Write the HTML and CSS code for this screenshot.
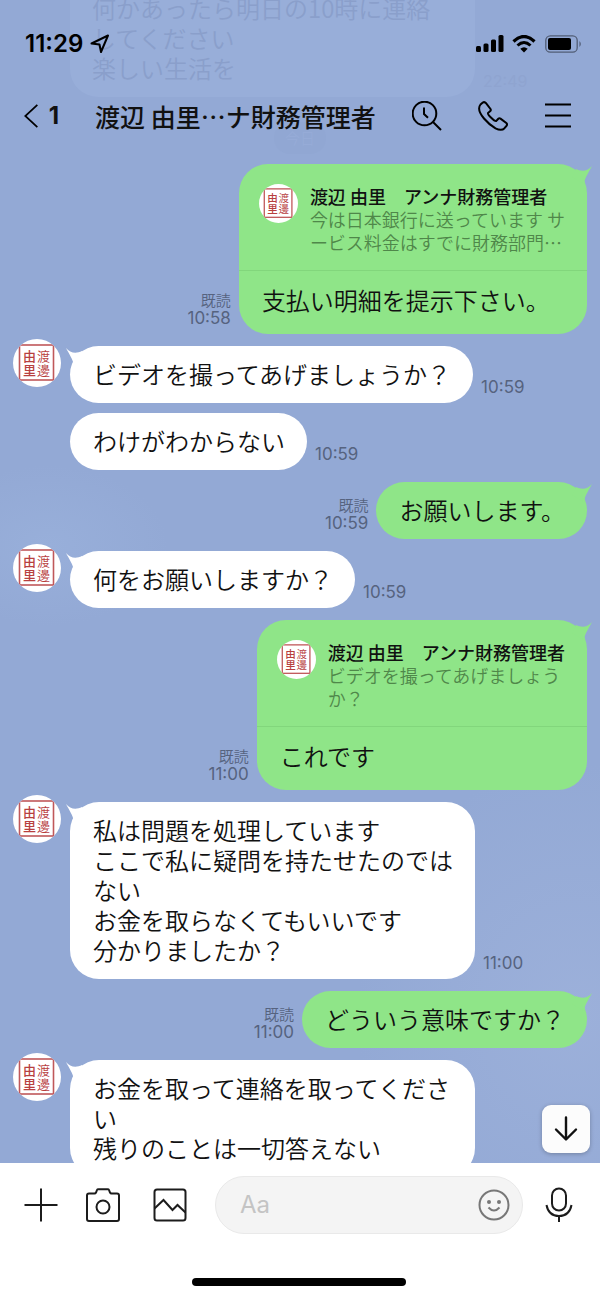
FILE: index.html
```html
<!DOCTYPE html>
<html lang="ja">
<head>
  <meta charset="UTF-8">
  <meta name="viewport" content="width=device-width, initial-scale=1">
  <title>トーク</title>
  <link rel="stylesheet" href="styles.css">
</head>
<body>
  <svg class="defs" aria-hidden="true">
    <symbol id="seal" viewBox="0 0 48 48">
      <rect width="48" height="48" fill="#fff"/>
      <rect x="6.5" y="6" width="34" height="35" fill="none" stroke="#c0585a" stroke-width="1.6"/>
      <g class="seal-text">
        <text x="10" y="22">由</text>
        <text x="10" y="36">里</text>
        <text class="thin" x="24" y="22">渡</text>
        <text class="thin" x="24" y="36">邊</text>
      </g>
    </symbol>
    <symbol id="tail" viewBox="0 0 22 20">
      <path d="M0 1C4 6 10 7 16 4L20 12L8 19C7 12 3 7 0 1Z"/>
    </symbol>
  </svg>

  <header class="top">
    <div class="faded">
      <div class="faded-bubble">何かあったら明日の10時に連絡<br>してください<br>楽しい生活を</div>
      <span class="faded-time">22:49</span>
    </div>
    <span class="faded-date">今日</span>
    <div class="status">
      <span class="clock">11:29</span>
      <svg class="arrow" width="20" height="20" viewBox="0 0 20 20"><path d="M1.500 9.500L18 1.500L11 18L9.500 10.500Z" fill="none" stroke="#000" stroke-width="2" stroke-linejoin="round"/></svg>
      <svg class="signal" width="28" height="18" viewBox="0 0 28 18">
        <rect x="0" y="11" width="5" height="6" rx="1.500"/><rect x="7.500" y="8.500" width="5" height="8.500" rx="1.500"/><rect x="15" y="4.500" width="5" height="12.500" rx="1.500"/><rect x="22.500" y="0" width="5" height="17" rx="1.500"/>
      </svg>
      <svg class="wifi" width="24" height="18" viewBox="0 0 24 18">
        <path d="M1.500 6.500Q12 -3.500 22.500 6.500" fill="none" stroke="#000" stroke-width="3.200"/>
        <path d="M5.500 10.500Q12 4.500 18.500 10.500" fill="none" stroke="#000" stroke-width="3"/>
        <path d="M8.300 13.800Q12 10.500 15.700 13.800L12 17.500Z"/>
      </svg>
      <svg width="37" height="18" viewBox="0 0 37 18">
        <rect x="0.800" y="0.800" width="31.400" height="16.400" rx="4.500" fill="none" stroke="#000" stroke-opacity=".45" stroke-width="1.300"/>
        <rect x="3" y="3" width="23" height="12" rx="2"/>
        <path d="M34.500 6Q37 9 34.500 12Z" fill-opacity=".5"/>
      </svg>
    </div>
    <nav class="nav">
      <button class="back" aria-label="戻る">
        <svg width="17" height="28" viewBox="0 0 17 28"><path d="M15.500 1L1.500 14L15.500 27"/></svg>
        <span>1</span>
      </button>
      <h1>渡辺 由里…ナ財務管理者</h1>
      <button aria-label="検索">
        <svg width="30" height="30" viewBox="0 0 30 30"><circle cx="12.500" cy="12.500" r="11.800"/><path d="M12 6.500V13L16 16.800M21 21L29 29"/></svg>
      </button>
      <button aria-label="通話">
        <svg width="30" height="30" viewBox="0 0 30 30"><path d="M2.500 3.500L4.500 1.700Q6.500 .3 8 2.200L12.500 8Q13.200 9.200 12.300 10.100L10 12Q9.500 13.200 13.200 16.800Q16.800 20.500 18.300 20L20.300 17.800Q21.300 16.800 22.500 17.600L28.300 22Q29.700 23.300 28.500 24.800L26.500 27.200Q23.500 30.300 17.500 27.300Q11 23.500 6 17.500Q-1.500 8.500 2.500 3.500Z"/></svg>
      </button>
      <button aria-label="メニュー">
        <svg width="30" height="30" viewBox="0 0 30 30"><path d="M1 3.500H27M1 14.500H27M1 25.500H27"/></svg>
      </button>
    </nav>
  </header>

  <main class="chat">
    <div class="row out">
      <div class="bubble card">
        <svg class="tail"><use href="#tail"/></svg>
        <div class="quote">
          <svg class="mini"><use href="#seal"/></svg>
          <div>
            <strong>渡辺 由里　アンナ財務管理者</strong>
            <p>今は日本銀行に送っています サ<br>ービス料金はすでに財務部門…</p>
          </div>
        </div>
        <p class="answer">支払い明細を提示下さい。</p>
      </div>
      <div class="meta">既読<time>10:58</time></div>
    </div>

    <div class="row">
      <svg class="avatar"><use href="#seal"/></svg>
      <div class="bubble"><svg class="tail"><use href="#tail"/></svg>ビデオを撮ってあげましょうか？</div>
      <div class="meta"><time>10:59</time></div>
    </div>

    <div class="row next">
      <div class="bubble">わけがわからない</div>
      <div class="meta"><time>10:59</time></div>
    </div>

    <div class="row out">
      <div class="bubble"><svg class="tail"><use href="#tail"/></svg>お願いします。</div>
      <div class="meta">既読<time>10:59</time></div>
    </div>

    <div class="row">
      <svg class="avatar"><use href="#seal"/></svg>
      <div class="bubble"><svg class="tail"><use href="#tail"/></svg>何をお願いしますか？</div>
      <div class="meta"><time>10:59</time></div>
    </div>

    <div class="row out">
      <div class="bubble card">
        <svg class="tail"><use href="#tail"/></svg>
        <div class="quote">
          <svg class="mini"><use href="#seal"/></svg>
          <div>
            <strong>渡辺 由里　アンナ財務管理者</strong>
            <p>ビデオを撮ってあげましょう<br>か？</p>
          </div>
        </div>
        <p class="answer">これです</p>
      </div>
      <div class="meta">既読<time>11:00</time></div>
    </div>

    <div class="row">
      <svg class="avatar"><use href="#seal"/></svg>
      <div class="bubble"><svg class="tail"><use href="#tail"/></svg>私は問題を処理しています<br>ここで私に疑問を持たせたのではない<br>お金を取らなくてもいいです<br>分かりましたか？</div>
      <div class="meta"><time>11:00</time></div>
    </div>

    <div class="row out">
      <div class="bubble"><svg class="tail"><use href="#tail"/></svg>どういう意味ですか？</div>
      <div class="meta">既読<time>11:00</time></div>
    </div>

    <div class="row">
      <svg class="avatar"><use href="#seal"/></svg>
      <div class="bubble"><svg class="tail"><use href="#tail"/></svg>お金を取って連絡を取ってください<br>残りのことは一切答えない</div>
    </div>

    <button class="down" aria-label="最新のメッセージへ">
      <svg width="24" height="26" viewBox="0 0 24 26"><path d="M12 1.500V23M2 13.500L12 23.500L22 13.500" fill="none" stroke="#111" stroke-width="2.400" stroke-linecap="round" stroke-linejoin="round"/></svg>
    </button>
  </main>

  <footer class="bottom">
    <form class="compose">
      <button type="button" aria-label="追加">
        <svg width="34" height="34" viewBox="0 0 34 34"><path d="M17 .5V33.500M.5 17H33.500"/></svg>
      </button>
      <button type="button" class="camera" aria-label="カメラ">
        <svg width="34" height="34" viewBox="0 0 34 34"><path d="M3 5.500H8.500Q9.500 5.500 10 4.500L11 2Q11.300 1.200 12.500 1.200H21.500Q22.700 1.200 23 2L24 4.500Q24.500 5.500 25.500 5.500H31Q33 5.500 33 7.500V31Q33 33 31 33H3Q1 33 1 31V7.500Q1 5.500 3 5.500Z"/><circle cx="17" cy="19" r="6.500"/></svg>
      </button>
      <button type="button" aria-label="写真">
        <svg width="34" height="34" viewBox="0 0 34 34"><rect x="1.500" y="1.500" width="31" height="31" rx="2.500"/><path d="M1.500 20.500L10.500 12L19.500 22L24.500 17L32.500 24.500"/></svg>
      </button>
      <div class="field">
        <input type="text" placeholder="Aa" aria-label="メッセージを入力">
        <button type="button" class="smile" aria-label="スタンプ">
          <svg width="32" height="32" viewBox="0 0 32 32"><circle cx="16" cy="16" r="14.500"/><path d="M10.500 18.500Q16 24.500 21.500 18.500"/><circle class="dot" cx="11" cy="13" r="2"/><circle class="dot" cx="21" cy="13" r="2"/></svg>
        </button>
      </div>
      <button type="button" aria-label="音声メッセージ">
        <svg width="28" height="36" viewBox="0 0 28 36"><rect x="7" y="1.500" width="14" height="22" rx="7"/><path d="M1.500 18Q3.500 29 14 29Q24.500 29 26.500 18M14 29V35"/></svg>
      </button>
    </form>
    <div class="home"></div>
  </footer>
</body>
</html>
```
FILE: styles.css
```css
* {
  box-sizing: border-box;
  margin: 0;
  padding: 0;
}

body {
  height: 100vh;
  display: flex;
  flex-direction: column;
  overflow: hidden;
  font-family: "Noto Sans CJK JP", sans-serif;
  font-weight: 350;
  color: #111;
  background:
    radial-gradient(ellipse 120px 80px at 8% 42%, #98afda, rgba(147, 169, 213, 0)),
    radial-gradient(ellipse 220px 250px at 96% 78%, #9cb0da, rgba(147, 169, 213, 0)),
    #93a9d5;
}

button {
  border: none;
  background: none;
  color: inherit;
  cursor: pointer;
}

svg {
  display: block;
}

.defs {
  position: absolute;
  width: 0;
  height: 0;
}

.seal-text {
  font-size: 13px;
  font-weight: 500;
  fill: #b8403f;
}

.seal-text .thin {
  font-weight: 350;
}

/* header */
.top {
  position: relative;
  flex: none;
  padding-bottom: 12px;
}

.faded {
  position: absolute;
  top: 0;
  left: 70px;
  display: flex;
  align-items: flex-end;
  gap: 8px;
}

.faded-bubble {
  display: flex;
  flex-direction: column;
  justify-content: flex-end;
  width: 405px;
  height: 97px;
  padding: 0 22px 14px;
  border-radius: 0 0 28px 28px;
  background: #98aed9;
  color: #8a9fcb;
  font-size: 24px;
  line-height: 30px;
}

.faded-time {
  padding-bottom: 6px;
  font: 16px/20px Inter, sans-serif;
  color: #8fa4d0;
}

.faded-date {
  position: absolute;
  bottom: 2px;
  left: 50%;
  transform: translateX(-50%);
  padding: 6px 11px;
  border-radius: 16px;
  font-size: 15px;
  line-height: 20px;
  background: #91a7d3;
  color: #96abd7;
}

.status {
  position: relative;
  display: flex;
  align-items: center;
  height: 88px;
  padding: 0 18px 0 25px;
}

.clock {
  font: 600 24px/28px Inter, sans-serif;
  color: #000;
}

.arrow {
  margin-left: 7px;
}

.signal {
  margin-left: auto;
}

.wifi {
  margin: 0 9px 0 8px;
}

.nav {
  position: relative;
  display: flex;
  align-items: center;
  gap: 36px;
  height: 56px;
  padding: 0 28px 0 24px;
}

.nav svg {
  fill: none;
  stroke: #000;
  stroke-width: 2;
}

.back {
  display: flex;
  align-items: center;
  gap: 10px;
  width: 35px;
  font: 700 24px/28px Inter, sans-serif;
}

.nav h1 {
  flex: 1;
  font-size: 25px;
  font-weight: 500;
  line-height: 30px;
  white-space: nowrap;
}

/* messages */
.chat {
  position: relative;
  flex: 1;
  min-height: 0;
  overflow: hidden;
  padding: 8px 13px 0;
}

.row {
  display: flex;
  align-items: flex-end;
  gap: 8px;
  margin-bottom: 12px;
}

.row.out {
  flex-direction: row-reverse;
}

.row.next {
  margin-top: -2px;
  padding-left: 57px;
}

.avatar {
  flex: none;
  align-self: flex-start;
  width: 48px;
  height: 48px;
  margin: -7px 1px 0 0;
  border-radius: 50%;
}

.bubble {
  position: relative;
  max-width: 405px;
  padding: 13px 22px 14px 23px;
  border-radius: 29px;
  background: #fff;
  font-size: 24px;
  line-height: 30px;
}

.out .bubble {
  background: #8fe588;
}

.tail {
  position: absolute;
  top: 1px;
  left: -4px;
  width: 22px;
  height: 20px;
  fill: #fff;
}

.out .tail {
  left: auto;
  right: -5px;
  fill: #8fe588;
  transform: scaleX(-1);
}

.bubble.card {
  padding: 0;
}

.quote {
  display: flex;
  gap: 12px;
  padding: 20px 22px 16px 20px;
  border-bottom: 1px solid #82d67c;
}

.mini {
  flex: none;
  width: 39px;
  height: 39px;
  border-radius: 50%;
}

.quote strong {
  display: block;
  font-size: 18px;
  font-weight: 500;
  line-height: 24px;
}

.quote p {
  font-size: 18px;
  line-height: 23px;
  color: #4f874a;
}

.answer {
  padding: 14px 23px 19px;
}

.meta {
  flex: none;
  padding-bottom: 6px;
  font-size: 15px;
  line-height: 19px;
  text-align: right;
  color: #56637f;
}

.meta time {
  display: block;
  font: 17px/19px Inter, sans-serif;
}

.down {
  position: absolute;
  right: 10px;
  bottom: 10px;
  display: grid;
  place-items: center;
  width: 48px;
  height: 48px;
  border-radius: 9px;
  background: #fcfcfc;
  box-shadow: 0 1px 4px rgba(0, 0, 0, 0.25);
}

/* input bar */
.bottom {
  flex: none;
  padding: 13px 27px 13px 24px;
  background: #fff;
}

.compose {
  display: flex;
  align-items: center;
  gap: 28px;
}

.compose svg {
  fill: none;
  stroke: #1c1c1c;
  stroke-width: 2;
}

.camera {
  margin-right: 5px;
}

.field {
  flex: 1;
  min-width: 0;
  display: flex;
  align-items: center;
  height: 58px;
  margin-right: -6px;
  padding: 0 12px 0 24px;
  border: 1px solid #e9e9e9;
  border-radius: 29px;
  background: #f4f4f4;
}

.field input {
  flex: 1;
  min-width: 0;
  border: none;
  outline: none;
  background: none;
  font: 24px/30px Inter, sans-serif;
}

.field input::placeholder {
  color: #c4c4c4;
}

.smile svg {
  stroke: #777;
}

.smile .dot {
  fill: #777;
  stroke: none;
}

.home {
  width: 214px;
  height: 8px;
  margin: 44px auto 0;
  border-radius: 4px;
  background: #000;
}
```
